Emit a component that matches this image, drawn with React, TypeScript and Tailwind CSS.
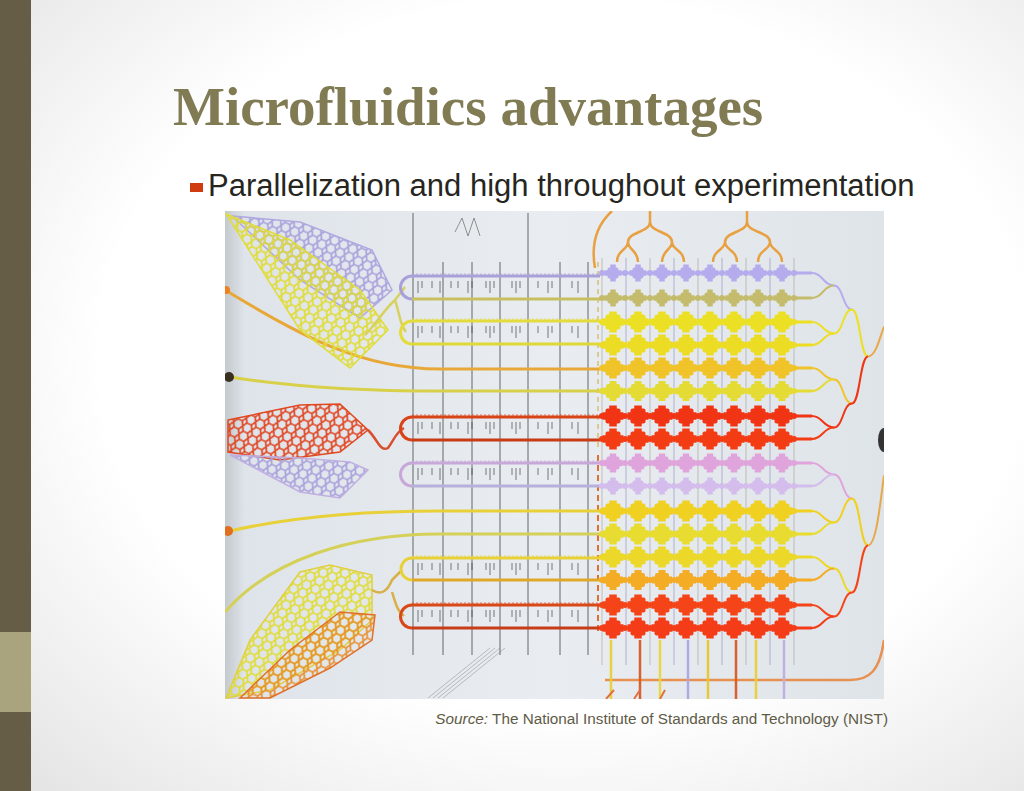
import React from 'react';

const rows = [
  { y: 273, c: '#b4acec', s: 11 },
  { y: 298, c: '#c4bc6c', s: 11 },
  { y: 322, c: '#ece024', s: 15 },
  { y: 345, c: '#ecdc24', s: 15 },
  { y: 368, c: '#f0c428', s: 15 },
  { y: 391, c: '#e4dc34', s: 14 },
  { y: 416, c: '#f03414', s: 15 },
  { y: 439, c: '#f43c14', s: 15 },
  { y: 463, c: '#e0a4dc', s: 13 },
  { y: 486, c: '#d4bcec', s: 11 },
  { y: 511, c: '#f0d020', s: 15 },
  { y: 534, c: '#e8dc30', s: 15 },
  { y: 557, c: '#ecd828', s: 15 },
  { y: 580, c: '#f4ac24', s: 14 },
  { y: 605, c: '#f44418', s: 15 },
  { y: 628, c: '#f43c18', s: 15 },
];

const cols = [613, 638, 662, 686, 710, 734, 758, 782];

const loops = [
  { y: 276, h: 23, top: '#a8a0d8', bot: '#c8c060' },
  { y: 321, h: 23, top: '#e4dc3c', bot: '#e0d838' },
  { y: 417, h: 23, top: '#d84418', bot: '#c83a14' },
  { y: 463, h: 23, top: '#c8a8d8', bot: '#b8b0dc' },
  { y: 558, h: 22, top: '#e8d038', bot: '#e0a828' },
  { y: 605, h: 23, top: '#d84818', bot: '#c83c18' },
];

const ticks = [418, 422, 432, 440, 451, 458, 468, 472, 486, 490, 494, 512, 516, 520, 538, 548, 552, 572, 578];

function curve(x0: number, y0: number, x1: number, y1: number) {
  const m = (x0 + x1) / 2;
  return `M${x0} ${y0} C${m} ${y0} ${m} ${y1} ${x1} ${y1}`;
}

function ChipPicture() {
  const lvl1 = [0, 1, 2, 3, 4, 5, 6, 7].map((i) => ({
    y: (rows[i * 2].y + rows[i * 2 + 1].y) / 2,
    c: rows[i * 2].c,
  }));
  const lvl2 = [0, 1, 2, 3].map((i) => ({
    y: (lvl1[i * 2].y + lvl1[i * 2 + 1].y) / 2,
    c: lvl1[i * 2 + 1].c,
  }));
  const lvl3 = [0, 1].map((i) => ({
    y: (lvl2[i * 2].y + lvl2[i * 2 + 1].y) / 2,
    c: i === 0 ? '#e8b040' : '#e8a848',
  }));

  return (
    <svg width="659" height="488" viewBox="225 211 659 488" className="block">
      <defs>
        <linearGradient id="bg" x1="0" x2="1" y1="0" y2="0">
          <stop offset="0" stopColor="#c4c9ce" />
          <stop offset="0.03" stopColor="#dfe4ea" />
          <stop offset="0.5" stopColor="#e9edf1" />
          <stop offset="1" stopColor="#dfe4e9" />
        </linearGradient>
        {[
          ['meshLav', '#a8a0dc'],
          ['meshYel', '#e0dc30'],
          ['meshRed', '#e04420'],
          ['meshOra', '#e89030'],
        ].map(([id, c]) => (
          <pattern
            key={id}
            id={id}
            width="10"
            height="9"
            patternUnits="userSpaceOnUse"
            patternTransform="rotate(25)"
          >
            <path d="M0 4.5 L2.5 0 H7.5 L10 4.5 L7.5 9 H2.5Z" fill="none" stroke={c} strokeWidth="1.6" />
          </pattern>
        ))}
      </defs>
      <rect x="225" y="211" width="659" height="488" fill="url(#bg)" />

      {/* faint zigzag at the top */}
      <path d="M455 232 L462 218 L468 236 L474 218 L480 236" fill="none" stroke="#777" strokeWidth="0.8" />

      {/* thin black vertical lines */}
      {[413, 443, 472, 500, 528, 560, 588].map((x) => (
        <line key={x} x1={x} y1={x === 413 || x === 528 ? 213 : 262} x2={x} y2="655" stroke="#3a3a3a" strokeWidth="1" opacity="0.75" />
      ))}

      {/* grid vertical colored lines */}
      {[602, 626, 650, 674, 698, 722, 746, 770, 794].map((x, i) => (
        <line key={x} x1={x} y1="258" x2={x} y2="665" stroke={i % 2 ? '#9898c0' : '#b0a8a0'} strokeWidth="1" opacity="0.7" />
      ))}
      <line x1="598" y1="455" x2="598" y2="632" stroke="#e07030" strokeWidth="2" strokeDasharray="6 4" />
      <line x1="598" y1="262" x2="598" y2="450" stroke="#d8c070" strokeWidth="1.5" strokeDasharray="5 4" />

      {/* top trees */}
      <g fill="none" stroke="#e8a040" strokeWidth="2.5">
        <path d="M595 268 C590 240 600 222 612 211" />
        <path d="M650 211 V222 C650 232 628 232 628 242 M650 222 C650 232 672 232 672 242" />
        <path d="M628 242 C628 250 617 250 617 262 M628 242 C628 250 638 250 638 262 M672 242 C672 250 662 250 662 262 M672 242 C672 250 684 250 684 262" />
        <path d="M747 211 V222 C747 232 725 232 725 242 M747 222 C747 232 770 232 770 242" />
        <path d="M725 242 C725 250 713 250 713 262 M725 242 C725 250 737 250 737 262 M770 242 C770 250 758 250 758 262 M770 242 C770 250 782 250 782 262" />
      </g>

      {/* left feed lines */}
      <g fill="none" strokeWidth="3">
        <path d="M225 290 C300 335 360 369 440 369 H600" stroke="#e8a838" />
        <path d="M230 377 C300 388 380 391 440 391 H600" stroke="#d8d048" />
        <path d="M230 531 C300 515 380 511 440 511 H600" stroke="#e8d038" />
        <path d="M225 612 C270 560 350 534 440 534 H600" stroke="#d4d058" />
      </g>
      <circle cx="229" cy="377" r="5" fill="#3a3020" />
      <circle cx="228" cy="531" r="5" fill="#e07020" />
      <circle cx="226" cy="290" r="4" fill="#f08020" />

      {/* meshes */}
      <polygon points="232,216 300,222 372,250 392,290 360,318 300,280" fill="url(#meshLav)" stroke="#b0a8e0" strokeWidth="1.5" />
      <polygon points="226,214 290,240 360,290 388,330 350,368 300,330" fill="url(#meshYel)" stroke="#e0dc38" strokeWidth="1.5" />
      <path d="M365 335 C378 322 382 312 395 300 L405 287 M395 300 C400 315 400 325 406 332" fill="none" stroke="#d8d060" strokeWidth="2.5" />
      <polygon points="228,420 300,405 340,404 368,430 340,452 280,460 228,452" fill="url(#meshRed)" stroke="#e04820" strokeWidth="1.5" />
      <polygon points="230,455 300,458 350,462 368,470 340,498 300,492" fill="url(#meshLav)" stroke="#c0b0e0" strokeWidth="1.5" />
      <path d="M368 430 C378 440 380 452 388 448 C394 440 396 432 404 428" fill="none" stroke="#d85030" strokeWidth="2.5" />
      <polygon points="226,698 250,640 300,572 330,565 372,575 372,620 340,650 270,690" fill="url(#meshYel)" stroke="#e0d040" strokeWidth="1.5" />
      <polygon points="240,698 290,650 340,612 375,615 372,640 330,668 270,698" fill="url(#meshOra)" stroke="#e07028" strokeWidth="1.5" />
      <path d="M372 590 C382 596 388 590 392 580 L402 570 M392 592 C396 605 398 612 404 616" fill="none" stroke="#d8b048" strokeWidth="2.5" />

      {/* hairpin loops */}
      {loops.map((l) => (
        <g key={l.y} fill="none" strokeWidth="3">
          <path d={`M600 ${l.y} H412 A${l.h / 2} ${l.h / 2} 0 0 0 412 ${l.y + l.h}`} stroke={l.top} />
          <path d={`M412 ${l.y + l.h} H600`} stroke={l.bot} />
          <path d={`M412 ${l.y - 2} H600`} stroke={l.top} strokeWidth="1" strokeDasharray="2 2" opacity="0.7" />
          {ticks.map((x, i) => (
            <line key={x} x1={x} y1={l.y + 5} x2={x} y2={l.y + (i % 3 === 0 ? 17 : 12)} stroke="#444" strokeWidth="1" opacity="0.7" />
          ))}
        </g>
      ))}

      {/* square grid */}
      {rows.map((r) => (
        <g key={r.y} fill={r.c}>
          <line x1="600" y1={r.y} x2="812" y2={r.y} stroke={r.c} strokeWidth="3" />
          {cols.map((x) => (
            <g key={x}>
              <rect x={x - r.s / 2} y={r.y - r.s / 2} width={r.s} height={r.s} rx="2" />
              <rect x={x - r.s / 2 - 3} y={r.y - r.s / 4} width={r.s + 6} height={r.s / 2} />
              <rect x={x - r.s / 4} y={r.y - r.s / 2 - 3} width={r.s / 2} height={r.s + 6} />
              <circle cx={x + 12} cy={r.y} r="3" />
            </g>
          ))}
          <circle cx="602" cy={r.y} r="3" />
        </g>
      ))}

      {/* right merging tree */}
      <g fill="none" strokeWidth="2">
        {rows.map((r, i) => (
          <path key={r.y} d={curve(812, r.y, 834, lvl1[Math.floor(i / 2)].y)} stroke={r.c} />
        ))}
        {lvl1.map((l, i) => (
          <path key={l.y} d={curve(834, l.y, 852, lvl2[Math.floor(i / 2)].y)} stroke={l.c} />
        ))}
        {lvl2.map((l, i) => (
          <path key={l.y} d={curve(852, l.y, 868, lvl3[Math.floor(i / 2)].y)} stroke={l.c} />
        ))}
        <path d={`M868 ${lvl3[0].y} C876 ${lvl3[0].y} 880 ${lvl3[0].y - 20} 884 ${lvl3[0].y - 30}`} stroke="#e8a848" />
        <path d={`M868 ${lvl3[1].y} C876 ${lvl3[1].y} 880 ${lvl3[1].y - 40} 884 ${lvl3[1].y - 70}`} stroke="#e8a848" />
        <path d="M884 640 C880 670 870 680 850 680 H605" stroke="#e89050" strokeWidth="2.5" />
      </g>
      <ellipse cx="884" cy="440" rx="6" ry="12" fill="#333" />

      {/* bottom outlets */}
      {cols.map((x, i) => (
        <line key={x} x1={x + (i % 2 ? 2 : -2)} y1="640" x2={x + (i % 2 ? 2 : -2)} y2="699" stroke={['#e8d040', '#d86030', '#e8d848', '#b0a8e0', '#e8c838', '#d86030', '#e8d040', '#c0b0e0'][i]} strokeWidth="2.5" />
      ))}
      <path d="M614 690 L606 699 M640 690 L634 699 M665 690 L660 699" stroke="#e07040" strokeWidth="2" />

      {/* faint diagonal lines bottom */}
      {[0, 5, 10, 15].map((d) => (
        <line key={d} x1={428 + d} y1="698" x2={490 + d} y2="648" stroke="#777" strokeWidth="0.7" opacity="0.6" />
      ))}
    </svg>
  );
}

export default function App() {
  return (
    <div className="flex h-[791px] w-[1024px] overflow-hidden bg-[radial-gradient(ellipse_at_55%_45%,#ffffff_58%,#e2e2e2_100%)]">
      <div className="flex w-[31px] shrink-0 flex-col">
        <div className="h-[632px] bg-[#655d45]" />
        <div className="h-[80px] bg-[#a9a47e]" />
        <div className="flex-1 bg-[#655d45]" />
      </div>

      <div className="flex flex-1 flex-col pl-[142px] pt-[77px]">
        <h1 className="font-['Liberation_Serif',serif] text-[55px] font-bold leading-[60px] text-[#817b53]">
          Microfluidics advantages
        </h1>

        <div className="ml-[17px] mt-[31px] flex items-center gap-[5px] font-['Liberation_Sans',Arial,sans-serif] text-[31px] leading-[36px] text-[#26251e]">
          <span className="mt-[3px] h-[9px] w-[13px] bg-[#d03c10]" />
          <span>Parallelization and high throughout experimentation</span>
        </div>

        <div className="ml-[52px] mt-[7px]">
          <ChipPicture />
        </div>

        <p className="ml-[52px] mt-[10px] w-[663px] text-right font-['Liberation_Sans',Arial,sans-serif] text-[15.3px] leading-[20px] text-[#5e5b46]">
          <span className="italic">Source:</span> The National Institute of Standards and Technology (NIST)
        </p>
      </div>
    </div>
  );
}
